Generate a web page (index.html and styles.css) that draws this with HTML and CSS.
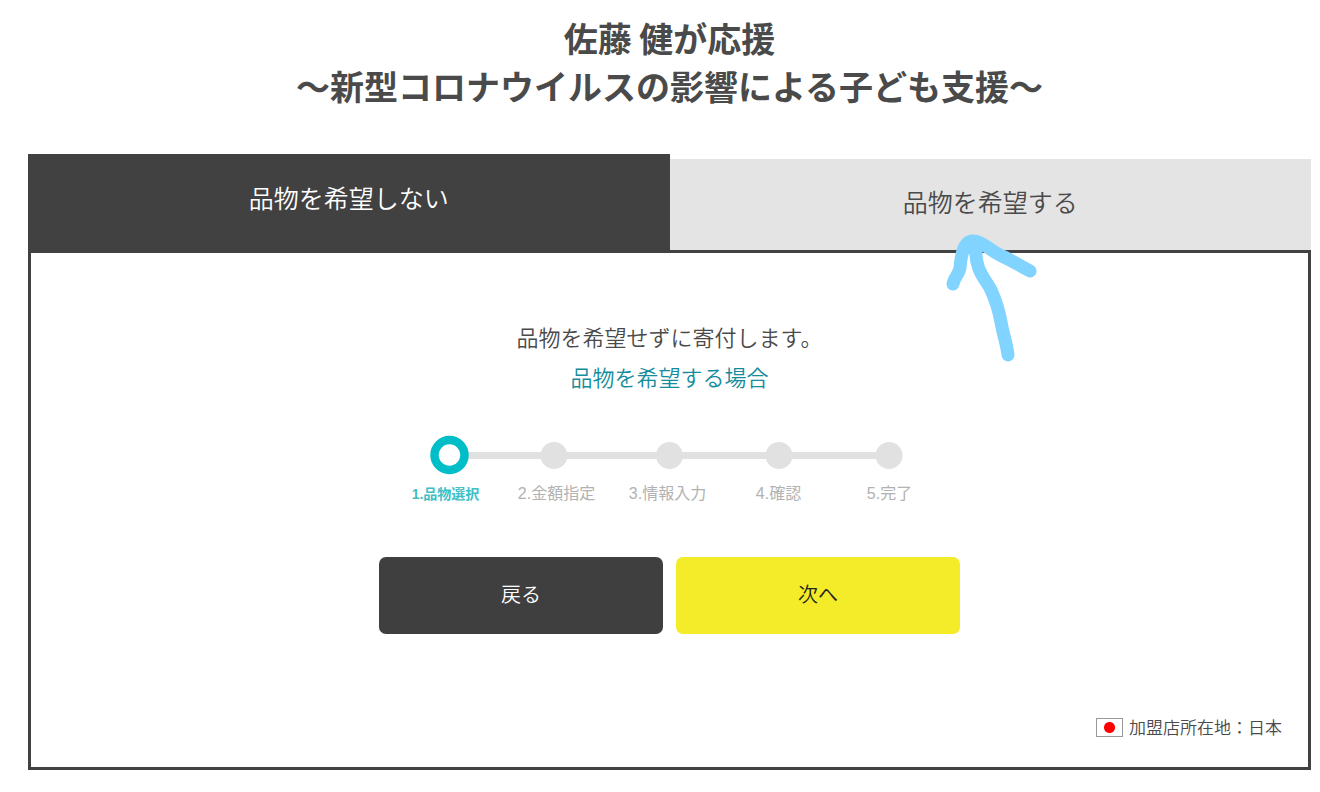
FILE: index.html
```html
<!DOCTYPE html>
<html lang="ja">
<head>
    <meta charset="UTF-8">
    <meta name="viewport" content="width=device-width, initial-scale=1.0">
    <title>佐藤 健が応援 ～新型コロナウイルスの影響による子ども支援～</title>
    <link rel="stylesheet" href="styles.css">
</head>
<body>
    <h1 class="title">佐藤 健が応援<br>～新型コロナウイルスの影響による子ども支援～</h1>

    <!-- タブ -->
    <div class="tabs">
        <div class="tab-item">
            <button type="button" class="tab active">品物を希望しない</button>
        </div>
        <div class="tab-item">
            <button type="button" class="tab">品物を希望する</button>
            <svg class="arrow" width="95" height="130" viewBox="0 0 95 130" aria-hidden="true">
                <path d="M8 51C9 44 14 42 15 35C16 20 20 9 27 8C36 7 44 17 57 23C68 28 77 34 85 38"/>
                <path d="M31 12C29 38 41 46 46 57C51 68 54 78 56 89C58 101 62 112 63 122"/>
            </svg>
        </div>
    </div>

    <!-- 寄付フォーム -->
    <main class="panel">
        <p class="lead">品物を希望せずに寄付します。</p>
        <p class="lead"><a href="#">品物を希望する場合</a></p>

        <div class="steps">
            <svg class="track" width="480" height="40" viewBox="0 0 480 40" aria-hidden="true">
                <path d="M30 20.5H459" stroke="#e1e1e1" stroke-width="7"/>
                <circle cx="19.5" cy="20" r="15" fill="#fff" stroke="#00bec8" stroke-width="8.5"/>
                <g fill="#e1e1e1">
                    <circle cx="124" cy="20.5" r="13.5"/>
                    <circle cx="239.5" cy="20.5" r="13.5"/>
                    <circle cx="349" cy="20.5" r="13.5"/>
                    <circle cx="459" cy="20.5" r="13.5"/>
                </g>
            </svg>
            <ol class="step-labels">
                <li class="current">1.品物選択</li>
                <li>2.金額指定</li>
                <li>3.情報入力</li>
                <li>4.確認</li>
                <li>5.完了</li>
            </ol>
        </div>

        <div class="buttons">
            <button type="button" class="btn btn-back">戻る</button>
            <button type="button" class="btn btn-next">次へ</button>
        </div>

        <div class="location">
            <span class="flag"></span>
            <span>加盟店所在地：日本</span>
        </div>
    </main>
</body>
</html>
```
FILE: styles.css
```css
* {
    box-sizing: border-box;
}

body {
    margin: 0;
    padding: 14px 9px 20px 28px;
    font-family: "Noto Sans CJK JP", sans-serif;
    font-weight: 350;
    color: #4a4a4a;
    background-color: #fff;
}

button {
    font-family: inherit;
    font-weight: inherit;
    border: none;
    cursor: pointer;
}

.title {
    margin: 0 0 44px;
    font-size: 34px;
    line-height: 48px;
    font-weight: bold;
    text-align: center;
}

.tabs {
    display: flex;
    align-items: flex-end;
}

.tab-item {
    position: relative;
    flex: 1;
}

.tab {
    display: block;
    width: 100%;
    padding: 22px 10px 29px;
    font-size: 25px;
    line-height: 40px;
    color: #4a4a4a;
    background-color: #e4e4e4;
}

.tab.active {
    padding: 23px 10px 33px;
    color: #fff;
    background-color: #414141;
}

.arrow {
    position: absolute;
    top: 74px;
    left: calc(50% - 45px);
    fill: none;
    stroke: #80d4ff;
    stroke-width: 13;
    stroke-linecap: round;
    stroke-linejoin: round;
    pointer-events: none;
}

.panel {
    padding: 63px 26px 24px;
    border: 3px solid #414141;
}

.lead {
    margin: 0;
    font-size: 22px;
    line-height: 40px;
    text-align: center;
}

.lead a {
    color: #148c9c;
    text-decoration: none;
}

.steps {
    display: flex;
    flex-direction: column;
    align-items: center;
    gap: 7px;
    margin-top: 39px;
}

.step-labels {
    display: grid;
    grid-template-columns: repeat(5, 111px);
    align-items: center;
    margin: 0;
    padding: 0 4px 0 0;
    list-style: none;
    font-family: "Liberation Sans", "Noto Sans CJK JP", sans-serif;
    font-size: 16px;
    line-height: 24px;
    font-weight: 400;
    text-align: center;
    color: #b2b2b2;
}

.step-labels .current {
    font-size: 14px;
    font-weight: bold;
    color: #3dbfc6;
}

.buttons {
    display: flex;
    justify-content: center;
    gap: 13px;
    margin-top: 51px;
}

.btn {
    width: 284px;
    padding: 17px 10px 20px;
    font-size: 20px;
    line-height: 40px;
    border-radius: 7px;
}

.btn-back {
    color: #fff;
    background-color: #3f3f3f;
}

.btn-next {
    color: #222;
    background-color: #f4eb29;
}

.location {
    display: flex;
    justify-content: flex-end;
    align-items: center;
    gap: 6px;
    margin-top: 77px;
    font-size: 17px;
    line-height: 32px;
}

.flag {
    width: 27px;
    height: 19px;
    border: 1px solid #999;
    background: radial-gradient(circle, #f00 5px, #fff 6px);
}
```
